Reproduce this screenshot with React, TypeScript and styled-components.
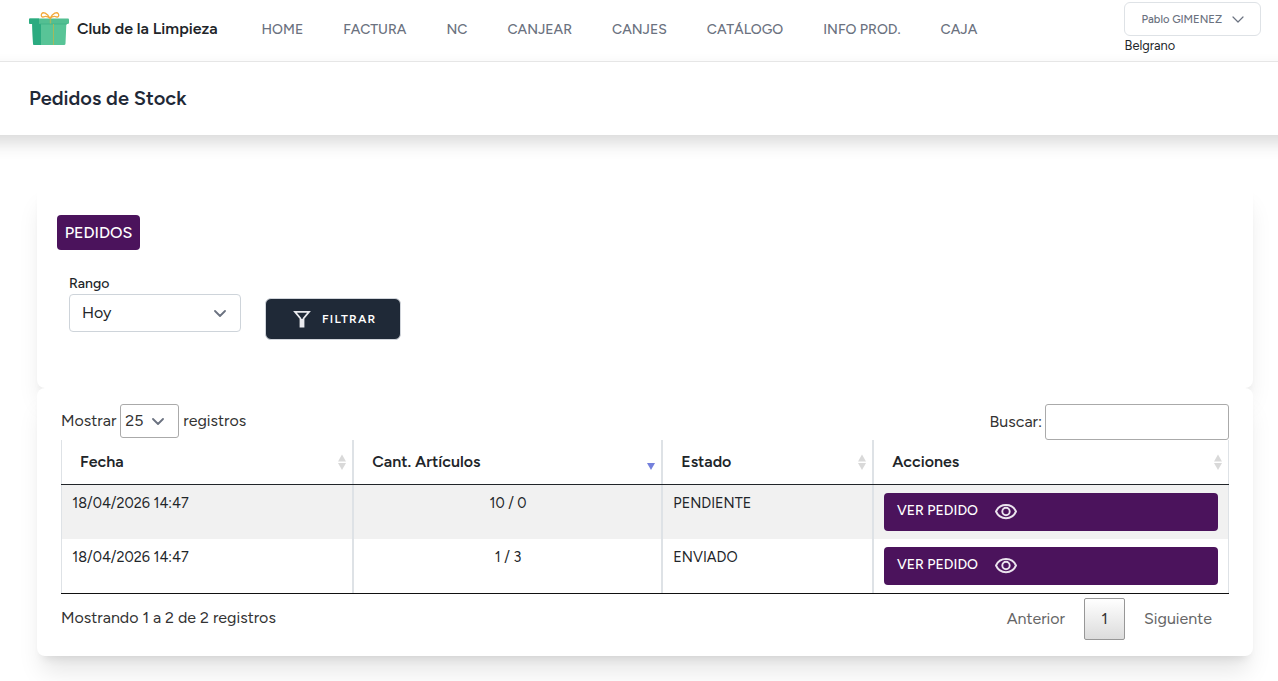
import React from "react";
import styled, { createGlobalStyle } from "styled-components";

const GlobalStyle = createGlobalStyle`
  *, *::before, *::after { box-sizing: border-box; }
  html, body { margin: 0; padding: 0; height: 681px; overflow: hidden; background: #fff; }
  body { font-family: Figtree, Lato, "Open Sans", sans-serif; font-size: 16px; line-height: 24px; color: #212529; }
  button, input { font: inherit; }
`;

const NavBar = styled.nav`
  display: flex;
  height: 62px;
  padding: 0 17px 0 29px;
  border-bottom: 1px solid #ebebeb;
  background: #fff;
`;

const Brand = styled.div`
  display: flex;
  align-items: center;
  width: 232.6px;
  height: 58px;
  gap: 8px;
  font-weight: 600;
  white-space: nowrap;
`;

const NavLinks = styled.div`
  display: flex;
  flex: 1;
  gap: 40px;
  align-items: center;
  height: 59px;
`;

const NavLink = styled.a`
  color: #6b7280;
  font-size: 14px;
  font-weight: 500;
  line-height: 20px;
  white-space: nowrap;
`;

const UserArea = styled.div`
  width: 137px;
  padding-top: 2px;
  font-size: 12.8px;
  line-height: 20px;
`;

const UserButton = styled.button`
  display: flex;
  align-items: center;
  justify-content: space-between;
  width: 100%;
  height: 34px;
  padding: 0 16px 0 16.6px;
  border: 1px solid #dee2e6;
  border-radius: 6px;
  background: #fff;
  color: #6b7280;
  font-size: 11.2px;
  font-weight: 500;
  white-space: nowrap;
`;

const Branch = styled.div`
  padding-left: 0.6px;
`;

const TitleBar = styled.header`
  height: 73px;
  margin: 0 -24px;
  padding: 22px 53px;
  background: #fff;
  box-shadow: 0 8px 16px rgba(0, 0, 0, 0.15);
`;

const Title = styled.h2`
  margin: 0;
  color: #1f2937;
  font-size: 20px;
  font-weight: 600;
  line-height: 28px;
`;

const Main = styled.main`
  padding: 48px 25px 0 37px;
`;

const Card = styled.section<{ $h: number; $pad: string }>`
  height: ${(p) => p.$h}px;
  padding: ${(p) => p.$pad};
  border-radius: 8px;
  background: #fff;
  box-shadow: 0 20px 25px -5px rgba(0, 0, 0, 0.1), 0 8px 10px -6px rgba(0, 0, 0, 0.1);
`;

const Badge = styled.div`
  display: flex;
  align-items: center;
  justify-content: center;
  width: 83px;
  height: 35px;
  border-radius: 4px;
  background: #4b135c;
  color: #fff;
  font-weight: 500;
`;

const FilterRow = styled.div`
  display: flex;
  gap: 24px;
  padding: 24px 12px;
`;

const Field = styled.div`
  width: 172px;
  font-size: 14px;
  font-weight: 500;
  line-height: 20px;
`;

const RangeSelect = styled.div`
  display: flex;
  align-items: center;
  justify-content: space-between;
  width: 172px;
  height: 38px;
  padding: 0 14px 0 12px;
  border: 1px solid #ced4da;
  border-radius: 4px;
  font-size: 16px;
  font-weight: 400;
`;

const FilterButton = styled.button`
  display: flex;
  align-items: center;
  width: 136px;
  height: 42px;
  margin-top: 24px;
  padding: 0 0 0 26px;
  gap: 10px;
  border: 1px solid #d1d5db;
  border-radius: 6px;
  background: #1f2937;
  color: #fff;
  font-size: 12px;
  font-weight: 600;
  letter-spacing: 1.2px;
`;

const Toolbar = styled.div`
  display: flex;
  justify-content: space-between;
  height: 36px;
  color: #333;
`;

const Control = styled.label<{ $h: number; $gap: number }>`
  display: flex;
  align-items: center;
  height: ${(p) => p.$h}px;
  gap: ${(p) => p.$gap}px;
`;

const LengthSelect = styled.span`
  display: flex;
  align-items: center;
  gap: 9px;
  width: 59px;
  height: 34px;
  padding-left: 4px;
  border: 1px solid #aaa;
  border-radius: 3px;
`;

const SearchInput = styled.input`
  width: 184px;
  height: 36px;
  border: 1px solid #aaa;
  border-radius: 3px;
  background: #fff;
`;

const Table = styled.div`
  border-bottom: 1px solid #111;
`;

const Row = styled.div<{ $odd?: boolean }>`
  display: grid;
  grid-template-columns: 292px 309px 211px 356px;
  height: 54px;
  background: ${(p) => (p.$odd ? "#f1f1f1" : "#fff")};
`;

const HeadRow = styled(Row)`
  height: 45px;
  border-bottom: 1px solid #212529;
`;

const HeadCell = styled.div`
  display: flex;
  align-items: center;
  justify-content: space-between;
  padding: 0 5px 0 18.2px;
  border: solid #dee2e6;
  border-width: 0 1px;
  font-weight: 600;

  &:first-child {
    padding-left: 18px;
  }
`;

const Cell = styled.div<{ $center?: boolean }>`
  padding: ${(p) => (p.$center ? "8px 10px 8px 11px" : "8px 10.3px")};
  border: solid #dee2e6;
  border-width: 0 1px;
  font-size: 14.4px;
  line-height: 21.6px;
  text-align: ${(p) => (p.$center ? "center" : "left")};
`;

const ActionCell = styled(Cell)`
  padding: 8px 10px;
`;

const ViewButton = styled.button`
  display: flex;
  align-items: center;
  width: 334px;
  height: 38px;
  gap: 17px;
  padding: 0 13px;
  border: 0;
  border-radius: 4px;
  background: #4b135c;
  color: #fff;
  font-size: 14px;
  font-weight: 500;
`;

const ViewLabel = styled.span`
  width: 81px;
  margin-top: -3px;
  white-space: nowrap;
`;

const Footer = styled.div`
  display: flex;
  justify-content: space-between;
  padding-top: 4px;
  color: #333;
`;

const Info = styled.div`
  padding-top: 8px;
`;

const Pager = styled.div`
  display: flex;
  align-items: center;
  height: 42px;
  padding-right: 17px;
  gap: 19px;
  color: #666;
`;

const PageButton = styled.button`
  width: 41px;
  height: 42px;
  border: 1px solid #979797;
  border-radius: 2px;
  background: linear-gradient(to bottom, #fff 0%, #dcdcdc 100%);
  color: #333;
`;

const GiftSvg = styled.svg`
  margin-top: -1px;
`;

const Gift = () => (
  <GiftSvg width="40" height="33" viewBox="0 0 40 33">
    <path d="M3 8H37.500L36.500 31.500Q36.500 33 35 33H5.500Q4 33 4 31.500Z" fill="#58c497" />
    <path d="M3 8H12V33H5.500Q4 33 4 31.500Z" fill="#2bab80" />
    <path d="M1 6.500H39Q40 6.500 40 7.500V10.500Q40 12 38.500 12H1.500Q0 12 0 10.500V7.500Q0 6.500 1 6.500Z" fill="#53bf92" />
    <path d="M1 6.500H10V12H1.500Q0 12 0 10.500V7.500Q0 6.500 1 6.500Z" fill="#2bab80" />
    <path d="M10 11.500H38V12.500H12Z" fill="#43b487" />
    <path d="M24.500 12V33" stroke="#a4b95d" />
    <path d="M21.500 5.500V11.500" stroke="#a4b95d" strokeWidth="1.4" />
    <path d="M21 6.200C18 1 14 -0.500 12.700 1.800C11.600 4 13 5.500 14.500 4.800Q18 3.600 21 6.200C24 1 28 -0.500 29.300 1.800C30.400 4 29 5.500 27.500 4.800Q24 3.600 21 6.200" fill="none" stroke="#f3aa3c" strokeWidth="1.3" />
  </GiftSvg>
);

const Chevron = ({ color = "#6b7280", stroke = 1.8 }) => (
  <svg width="12" height="7" viewBox="0 0 12 7" fill="none" stroke={color} strokeWidth={stroke} strokeLinecap="round" strokeLinejoin="round">
    <path d="M1 1L6 6L11 1" />
  </svg>
);

const Funnel = () => (
  <svg width="20" height="18" viewBox="0 0 20 18" fill="none">
    <path d="M3 1.800H17L11.500 8.500V16.500H8.500V8.500Z" stroke="#e9eaee" strokeWidth="1.800" />
    <path d="M8.500 9H11.500V16.500H8.500Z" fill="#e9eaee" />
  </svg>
);

const Eye = () => (
  <svg width="22" height="16" viewBox="0 0 22 16" fill="none" stroke="#ebe4ee" strokeWidth="1.9">
    <path d="M1 7.500C3 3 6.700 1 11 1S19 3 21 7.500C19 12 15.300 14.200 11 14.200S3 12 1 7.500Z" />
    <circle cx="11" cy="7.500" r="3.700" />
  </svg>
);

const Sort = ({ active = false }) => (
  <svg width="10" height="16" viewBox="0 0 10 16">
    {!active && <path d="M1 7.500L5 0.500L9 7.500Z" fill="#d9d9d9" />}
    <path d="M1 9H9L5 16Z" fill={active ? "#7480dc" : "#d9d9d9"} />
  </svg>
);

const links = ["HOME", "FACTURA", "NC", "CANJEAR", "CANJES", "CATÁLOGO", "INFO PROD.", "CAJA"];

const headings = ["Fecha", "Cant. Artículos", "Estado", "Acciones"];

const orders = [
  { date: "18/04/2026 14:47", count: "10 / 0", state: "PENDIENTE" },
  { date: "18/04/2026 14:47", count: "1 / 3", state: "ENVIADO" },
];

export default function App() {
  return (
    <>
      <GlobalStyle />
      <NavBar>
        <Brand>
          <Gift />
          <span>Club de la Limpieza</span>
        </Brand>
        <NavLinks>
          {links.map((label) => (
            <NavLink key={label}>{label}</NavLink>
          ))}
        </NavLinks>
        <UserArea>
          <UserButton>
            Pablo GIMENEZ
            <Chevron stroke={1.2} />
          </UserButton>
          <Branch>Belgrano</Branch>
        </UserArea>
      </NavBar>
      <TitleBar>
        <Title>Pedidos de Stock</Title>
      </TitleBar>
      <Main>
        <Card $h={205} $pad="32px 20px">
          <Badge>PEDIDOS</Badge>
          <FilterRow>
            <Field>
              Rango
              <RangeSelect>
                Hoy
                <Chevron />
              </RangeSelect>
            </Field>
            <FilterButton>
              <Funnel />
              FILTRAR
            </FilterButton>
          </FilterRow>
        </Card>
        <Card $h={268} $pad="16px 24px">
          <Toolbar>
            <Control $h={34} $gap={4}>
              Mostrar
              <LengthSelect>
                25
                <Chevron />
              </LengthSelect>
              registros
            </Control>
            <Control $h={36} $gap={3}>
              Buscar:
              <SearchInput />
            </Control>
          </Toolbar>
          <Table>
            <HeadRow>
              {headings.map((label, i) => (
                <HeadCell key={label}>
                  {label}
                  <Sort active={i === 1} />
                </HeadCell>
              ))}
            </HeadRow>
            {orders.map((order, i) => (
              <Row key={order.state} $odd={i === 0}>
                <Cell>{order.date}</Cell>
                <Cell $center>{order.count}</Cell>
                <Cell>{order.state}</Cell>
                <ActionCell>
                  <ViewButton>
                    <ViewLabel>VER PEDIDO</ViewLabel>
                    <Eye />
                  </ViewButton>
                </ActionCell>
              </Row>
            ))}
          </Table>
          <Footer>
            <Info>Mostrando 1 a 2 de 2 registros</Info>
            <Pager>
              Anterior
              <PageButton>1</PageButton>
              Siguiente
            </Pager>
          </Footer>
        </Card>
      </Main>
    </>
  );
}
